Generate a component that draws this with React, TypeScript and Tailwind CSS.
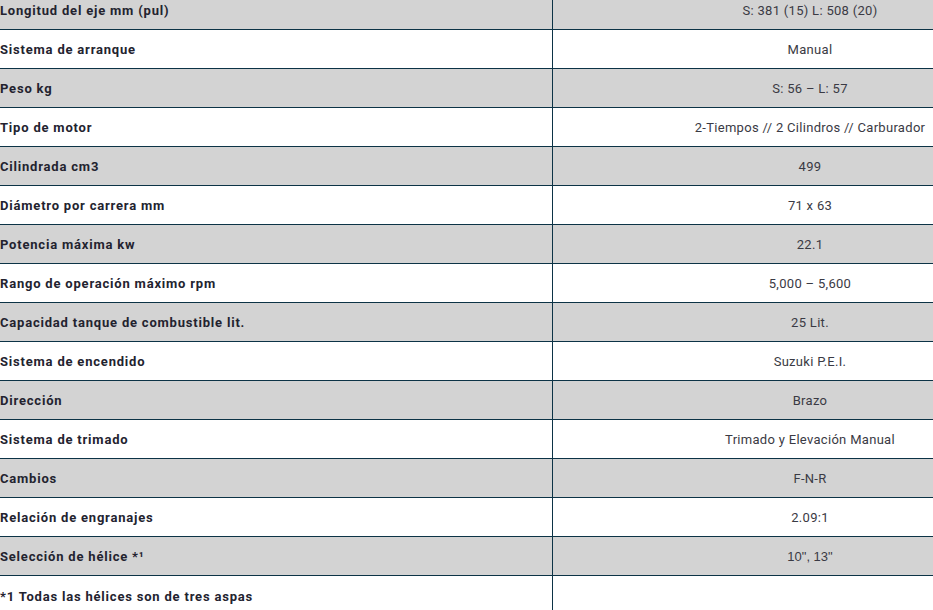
const rows: [string, React.ReactNode][] = [
  ["Longitud del eje mm (pul)", "S: 381 (15) L: 508 (20)"],
  ["Sistema de arranque", "Manual"],
  ["Peso kg", "S: 56 – L: 57"],
  ["Tipo de motor", "2-Tiempos // 2 Cilindros // Carburador"],
  ["Cilindrada cm3", "499"],
  ["Diámetro por carrera mm", "71 x 63"],
  ["Potencia máxima kw", "22.1"],
  ["Rango de operación máximo rpm", "5,000 – 5,600"],
  ["Capacidad tanque de combustible lit.", "25 Lit."],
  ["Sistema de encendido", "Suzuki P.E.I."],
  ["Dirección", "Brazo"],
  ["Sistema de trimado", "Trimado y Elevación Manual"],
  ["Cambios", "F-N-R"],
  ["Relación de engranajes", "2.09:1"],
  [
    "Selección de hélice *¹",
    <span className="font-['Liberation_Sans',sans-serif] tracking-normal">10", 13"</span>,
  ],
];

export default function App() {
  return (
    <div className="w-[933px] h-[610px] overflow-hidden bg-white font-['Roboto',sans-serif]">
      <div className="w-[1067px] -mt-[9px]">
        {rows.map(([label, value], i) => (
          <div
            key={i}
            className={`flex h-[39px] border-b border-[#0c3346] ${i % 2 === 0 ? "bg-[#d3d3d3]" : "bg-white"}`}
          >
            <div className="w-[553px] shrink-0 border-r border-[#0c3346] flex items-center pt-[2px] text-[13px] font-bold tracking-[0.8px] text-[#23232f]">
              {label}
            </div>
            <div className="flex-1 flex items-center justify-center pt-[2px] text-[13px] tracking-[0.3px] text-[#3a3a44]">
              {value}
            </div>
          </div>
        ))}
        <div className="flex h-[39px] bg-white">
          <div className="w-[553px] shrink-0 border-r border-[#0c3346] flex items-center pt-[2px] text-[13px] font-bold tracking-[0.8px] text-[#23232f]">
            *1 Todas las hélices son de tres aspas
          </div>
          <div className="flex-1" />
        </div>
      </div>
    </div>
  );
}
